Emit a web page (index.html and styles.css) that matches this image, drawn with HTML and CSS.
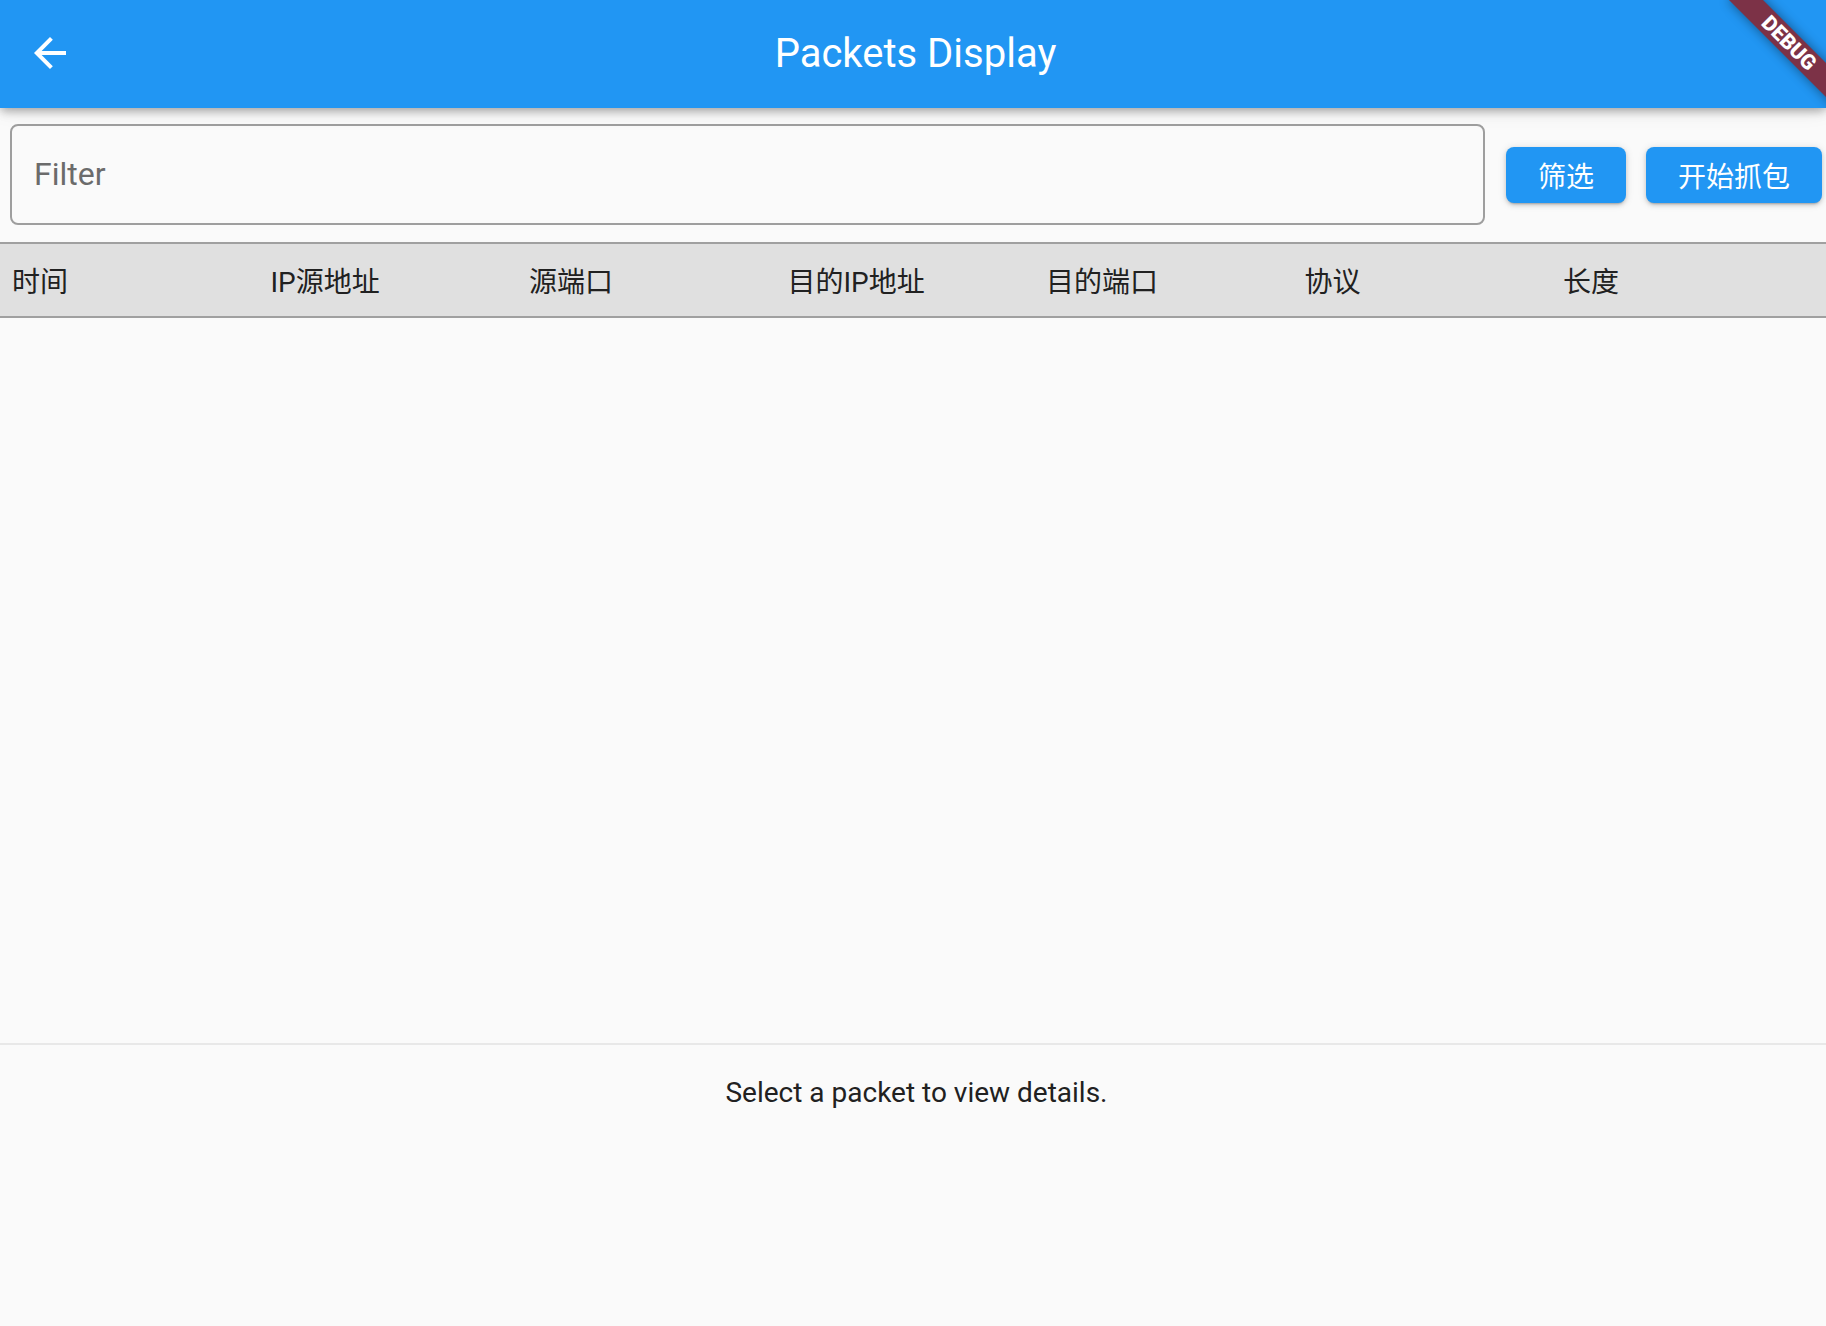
FILE: index.html
```html
<!DOCTYPE html>
<html lang="zh">
<head>
<meta charset="utf-8">
<title>Packets Display</title>
<link rel="stylesheet" href="styles.css">
</head>
<body>
<div class="app">
  <header class="appbar">
    <div class="lead">
      <svg class="back" viewBox="0 0 24 24" aria-hidden="true"><path d="M20 11H7.83l5.59-5.59L12 4l-8 8 8 8 1.41-1.41L7.83 13H20v-2z" fill="#fff"/></svg>
    </div>
    <h1 class="title">Packets Display</h1>
    <div class="trail"></div>
  </header>
  <main class="content">
    <div class="filter-row">
      <div class="filter-field"><span class="placeholder">Filter</span></div>
      <button class="btn btn-filter">筛选</button>
      <button class="btn btn-start">开始抓包</button>
    </div>
    <div class="table-head">
      <div class="cell">时间</div>
      <div class="cell">IP源地址</div>
      <div class="cell">源端口</div>
      <div class="cell">目的IP地址</div>
      <div class="cell">目的端口</div>
      <div class="cell">协议</div>
      <div class="cell">长度</div>
    </div>
    <div class="table-body"></div>
    <div class="details">Select a packet to view details.</div>
  </main>
  <div class="debug-banner">DEBUG</div>
</div>
</body>
</html>
```

FILE: styles.css
```css
html, body {
  margin: 0;
  padding: 0;
}
body {
  background: #fafafa;
  font-family: Roboto, "Noto Sans CJK SC", sans-serif;
}
.app {
  position: relative;
  width: 1826px;
  height: 1326px;
  overflow: hidden;
  display: flex;
  flex-direction: column;
}
.appbar {
  position: relative;
  z-index: 2;
  flex: 0 0 auto;
  height: 108px;
  box-sizing: border-box;
  padding-bottom: 2px;
  background: #2196f3;
  display: grid;
  grid-template-columns: 1fr auto 1fr;
  align-items: center;
  box-shadow: 0 4px 8px -2px rgba(0,0,0,0.2), 0 4px 10px 0 rgba(0,0,0,0.14), 0 1px 20px 0 rgba(0,0,0,0.10);
}
.lead {
  display: flex;
  align-items: center;
  padding-left: 26px;
}
.back {
  width: 48px;
  height: 48px;
  display: block;
}
.title {
  margin: 0;
  padding: 2px 0 0 5px;
  font-family: Roboto, sans-serif;
  font-weight: 400;
  font-size: 40px;
  line-height: 48px;
  color: #fff;
  white-space: nowrap;
}
.content {
  flex: 1 1 auto;
  display: flex;
  flex-direction: column;
  min-height: 0;
}
.filter-row {
  display: flex;
  align-items: center;
  padding: 16px 4px 17px 10px;
}
.filter-field {
  flex: 1 1 auto;
  height: 101px;
  box-sizing: border-box;
  border: 2px solid #9e9e9e;
  border-radius: 8px;
  display: flex;
  align-items: center;
  padding: 0 0 2px 22px;
}
.placeholder {
  font-family: Roboto, sans-serif;
  font-size: 32px;
  color: #6b6b6b;
}
.btn {
  flex: 0 0 auto;
  height: 56px;
  box-sizing: border-box;
  padding: 5px 32px 0;
  border: none;
  border-radius: 8px;
  background: #2196f3;
  color: #fff;
  font-family: Roboto, "Noto Sans CJK SC", sans-serif;
  font-size: 28px;
  line-height: 51px;
  box-shadow: 0 3px 2px -2px rgba(0,0,0,0.2), 0 2px 4px 0 rgba(0,0,0,0.14), 0 1px 8px 0 rgba(0,0,0,0.12);
}
.btn-filter {
  margin-left: 21px;
}
.btn-start {
  margin-left: 20px;
}
.table-head {
  flex: 0 0 auto;
  height: 76px;
  box-sizing: border-box;
  border-top: 2px solid #a0a0a0;
  border-bottom: 2px solid #a0a0a0;
  background: #e0e0e0;
  display: grid;
  grid-template-columns: repeat(7, 258.5px);
  align-items: center;
  padding-left: 12px;
}
.cell {
  padding-top: 5px;
  font-size: 28px;
  color: #212121;
  white-space: nowrap;
  line-height: 36px;
}
.table-body {
  flex: 1 1 auto;
}
.details {
  flex: 0 0 283px;
  box-sizing: border-box;
  border-top: 2px solid #e8e8e8;
  padding: 31px 0 0 7px;
  text-align: center;
  font-size: 28px;
  line-height: 33px;
  color: #212121;
}
.debug-banner {
  position: absolute;
  z-index: 3;
  left: 1714px;
  top: 36px;
  width: 160px;
  height: 24px;
  box-sizing: border-box;
  padding-right: 14px;
  transform: rotate(45deg);
  background: #7c3247;
  box-shadow: 0 0 12px rgba(0,0,0,0.45);
  color: #fff;
  font-family: Roboto, sans-serif;
  font-weight: 900;
  font-size: 21px;
  line-height: 24px;
  text-align: center;
}
```
